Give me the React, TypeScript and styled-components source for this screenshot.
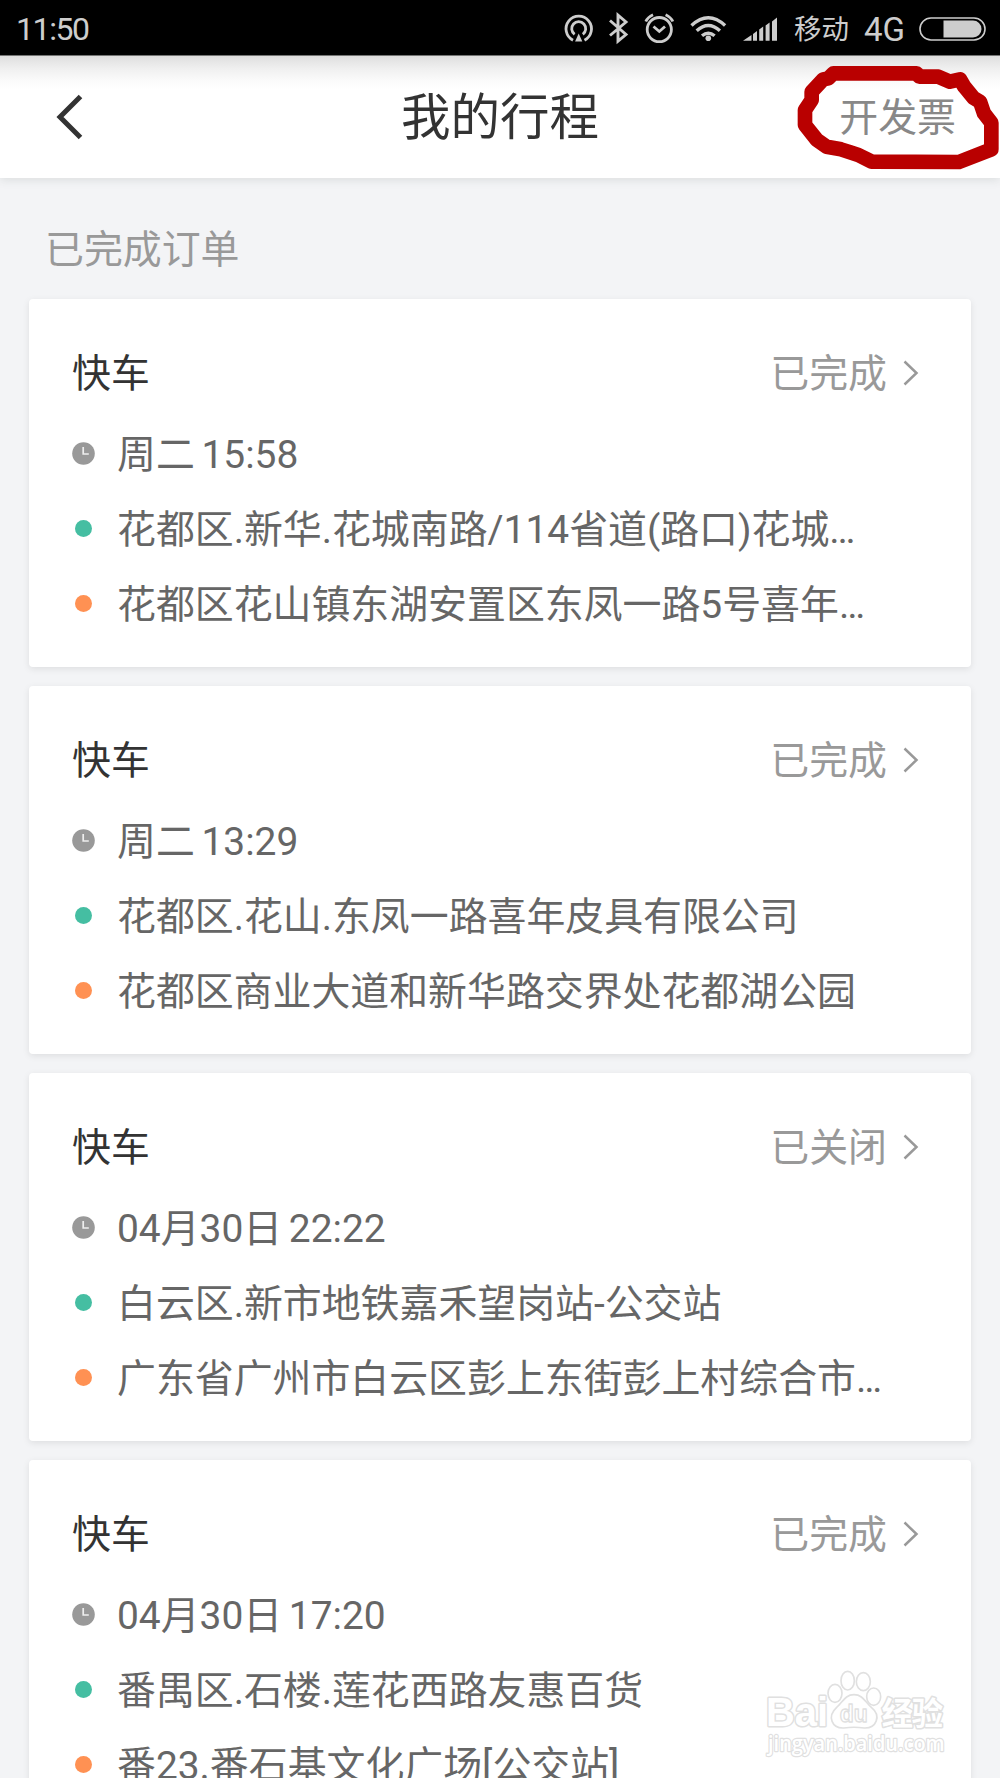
import React from 'react';
import styled, { createGlobalStyle } from 'styled-components';

const GlobalStyle = createGlobalStyle`
  * { box-sizing: border-box; }
  body {
    margin: 0;
    background: #f3f4f6;
    font-family: Roboto, "Noto Sans CJK SC", sans-serif;
  }
`;

const Screen = styled.div`
  position: relative;
  display: flex;
  flex-direction: column;
  width: 1000px;
  height: 1778px;
  overflow: hidden;
  background: #f3f4f6;
`;

const StatusBar = styled.div`
  display: flex;
  align-items: center;
  justify-content: space-between;
  flex: none;
  height: 56px;
  padding: 2px 14px 0 16px;
  background: #000;
  border-bottom: 1px solid #777;
  color: #cdcdcd;
`;

const Clock = styled.span`
  font-size: 32px;
  letter-spacing: -1.4px;
`;

const StatusIcons = styled.div`
  display: flex;
  align-items: center;
`;

const StatusGlyphs = styled.svg`
  display: block;
  width: 222px;
  height: 53px;
  margin-top: -2px;
`;

const Carrier = styled.span`
  margin-left: 12px;
  padding-top: 2px;
  font-size: 27.5px;
  line-height: 53px;
`;

const Network = styled.span`
  margin-left: 15px;
  padding-top: 1px;
  font-size: 33px;
  line-height: 53px;
`;

const Battery = styled.svg`
  display: block;
  width: 67px;
  height: 24px;
  margin-left: 14px;
`;

const Header = styled.header`
  position: relative;
  z-index: 1;
  display: grid;
  grid-template-columns: 1fr auto 1fr;
  align-items: center;
  flex: none;
  height: 122px;
  padding: 0 44px;
  background: linear-gradient(#dedede 0, #efefef 12px, #fafafa 24px, #fff 33px);
  box-shadow: 0 2px 9px rgba(60, 80, 70, 0.13);
`;

const BackIcon = styled.svg`
  display: block;
  width: 28px;
  height: 46px;
  margin-left: 12px;
`;

const Title = styled.h1`
  margin: 0;
  padding-top: 2px;
  color: #333;
  font-size: 49.5px;
  font-weight: 400;
  line-height: 118px;
`;

const InvoiceLink = styled.span`
  justify-self: end;
  padding-top: 2px;
  color: #888;
  font-size: 38.9px;
  line-height: 118px;
`;

const HandCircle = styled.svg`
  position: absolute;
  z-index: 2;
  left: 780px;
  top: 50px;
  width: 220px;
  height: 130px;
`;

const Section = styled.h2`
  flex: none;
  margin: 0;
  padding: 37px 0 0 45px;
  height: 121px;
  color: #999;
  font-size: 38.9px;
  font-weight: 400;
  line-height: 70px;
`;

const List = styled.main`
  display: flex;
  flex-direction: column;
  flex: none;
  gap: 19px;
  padding: 0 29px;
`;

const Card = styled.article`
  height: 368px;
  padding: 33px 52px 0 43px;
  background: #fff;
  border-radius: 4px;
  box-shadow: 0 2px 7px rgba(0, 0, 0, 0.09);
`;

const CardHead = styled.div`
  display: flex;
  align-items: center;
  height: 82px;
  margin-bottom: 2px;
  font-size: 38.9px;
  line-height: 82px;
`;

const Kind = styled.span`
  flex: 1;
  padding-top: 2px;
  color: #333;
`;

const Status = styled.span`
  padding-top: 2px;
  color: #999;
`;

const Arrow = styled.svg`
  display: block;
  width: 16px;
  height: 28px;
  margin-left: 16px;
`;

const Row = styled.div`
  display: flex;
  align-items: center;
  height: 75px;
  color: #666;
  font-size: 38.9px;
  line-height: 71px;
  white-space: pre;
`;

const RowText = styled.span`
  padding-top: 1px;
`;

const TimeText = styled(RowText)`
  word-spacing: -3px;
`;

const Marker = styled.span`
  display: flex;
  justify-content: center;
  width: 23px;
  margin-right: 22px;
`;

const Dot = styled.i<{ $color: string }>`
  width: 17px;
  height: 17px;
  border-radius: 50%;
  background: ${(p) => p.$color};
`;

const Watermark = styled.svg`
  position: absolute;
  left: 740px;
  top: 1640px;
  width: 230px;
  height: 138px;
`;

interface Trip {
  status: string;
  time: string;
  from: string;
  to: string;
}

const trips: Trip[] = [
  { status: '已完成', time: '周二 15:58', from: '花都区.新华.花城南路/114省道(路口)花城…', to: '花都区花山镇东湖安置区东凤一路5号喜年…' },
  { status: '已完成', time: '周二 13:29', from: '花都区.花山.东凤一路喜年皮具有限公司', to: '花都区商业大道和新华路交界处花都湖公园' },
  { status: '已关闭', time: '04月30日 22:22', from: '白云区.新市地铁嘉禾望岗站-公交站', to: '广东省广州市白云区彭上东街彭上村综合市…' },
  { status: '已完成', time: '04月30日 17:20', from: '番禺区.石楼.莲花西路友惠百货', to: '番23.番石基文化广场[公交站]' },
];

function TripCard({ trip }: { trip: Trip }) {
  return (
    <Card>
      <CardHead>
        <Kind>快车</Kind>
        <Status>{trip.status}</Status>
        <Arrow viewBox="0 0 16 28">
          <path d="M1.5 2.5 13.5 14 1.5 25.5" fill="none" stroke="#999" strokeWidth="2.5" />
        </Arrow>
      </CardHead>
      <Row>
        <Marker>
          <svg width="23" height="23" viewBox="0 0 23 23">
            <circle cx="11.5" cy="11.5" r="11.3" fill="#999" />
            <path d="M11.2 5v7h5.6" fill="none" stroke="#eee" strokeWidth="1.7" />
          </svg>
        </Marker>
        <TimeText>{trip.time}</TimeText>
      </Row>
      <Row>
        <Marker><Dot $color="#45bea2" /></Marker>
        <RowText>{trip.from}</RowText>
      </Row>
      <Row>
        <Marker><Dot $color="#ff9153" /></Marker>
        <RowText>{trip.to}</RowText>
      </Row>
    </Card>
  );
}

function StatusSymbols() {
  return (
    <StatusGlyphs viewBox="20 0 222 53" fill="none" stroke="#cdcdcd">
      <g strokeWidth="2.8">
        <path d="M33 39.2a12.7 12.7 0 1 1 11.5 0" />
        <path d="M34.6 33.3a7 7 0 1 1 8.2 0" />
        <path d="M38.7 32.5 42.3 40.5h-7.2z" fill="#cdcdcd" stroke="none" />
      </g>
      <path d="M70 19.5 86 33.5 78 40.2V14.2L86 21 70 34.5" strokeWidth="2.9" />
      <g strokeWidth="2.8">
        <circle cx="119.3" cy="28.6" r="12.1" />
        <path d="M113.5 25.5 119.3 30.5 125 25.5" />
        <path d="M105.8 20.5q2-4.5 7.2-6.8M132.8 20.5q-2-4.5-7.2-6.8" />
      </g>
      <g strokeWidth="3.4">
        <path d="M151.5 24.5q16.8-15.5 33.6 0" />
        <path d="M156.7 29.8q11.6-10.5 23.2 0" />
        <path d="M162 34.8q6.3-5.2 12.6 0" />
        <circle cx="168.3" cy="37.3" r="2.8" fill="#cdcdcd" stroke="none" />
      </g>
      <g fill="#cdcdcd" stroke="none">
        <path d="M203 39.8 211.5 34v5.8zM213 33l4-3v9.8h-4zM219.2 28.6l4-3v14.2h-4zM225.6 24.6l4-3v18.2h-4zM232 20.4l5-4v23.4h-5z" />
      </g>
    </StatusGlyphs>
  );
}

export default function App() {
  return (
    <Screen>
      <GlobalStyle />
      <StatusBar>
        <Clock>11:50</Clock>
        <StatusIcons>
          <StatusSymbols />
          <Carrier>移动</Carrier>
          <Network>4G</Network>
          <Battery viewBox="0 0 67 24">
            <rect x="1" y="1" width="65" height="22" rx="11" fill="none" stroke="#cdcdcd" strokeWidth="1.6" />
            <path d="M24.5 3.5H54a8.5 8.5 0 0 1 0 17H24.5z" fill="#cdcdcd" />
          </Battery>
        </StatusIcons>
      </StatusBar>
      <Header>
        <BackIcon viewBox="0 0 28 46">
          <path d="M24.5 2.5 4 23 24.5 43.5" fill="none" stroke="#333" strokeWidth="5" />
        </BackIcon>
        <Title>我的行程</Title>
        <InvoiceLink>开发票</InvoiceLink>
      </Header>
      <HandCircle viewBox="0 0 660 390">
        <path
          d="M160 70H410L418 80H475L510 95L540 88L553 110L580 143L600 155L612 190L634 218V298L537 336L275 335L235 315L210 307L183 298L140 290L110 269L75 225V180L95 150V125L130 88L145 85Z"
          fill="none"
          stroke="#b90000"
          strokeWidth="44"
          strokeLinejoin="round"
        />
      </HandCircle>
      <Section>已完成订单</Section>
      <List>
        {trips.map((trip) => (
          <TripCard key={trip.time} trip={trip} />
        ))}
      </List>
      <Watermark viewBox="0 0 690 414" fill="#fff" stroke="#e0e0e0" strokeWidth="5" strokeLinejoin="round">
        <g fontFamily="'Liberation Sans', sans-serif" fontWeight="700" paintOrder="stroke" strokeWidth="9">
          <text x="78" y="259" fontSize="124" textLength="186" lengthAdjust="spacingAndGlyphs">Bai</text>
          <text x="425" y="254" fontSize="94" fontFamily="'Noto Sans CJK SC', sans-serif" textLength="184">经验</text>
        </g>
        <ellipse cx="285" cy="160" rx="21" ry="27" />
        <ellipse cx="323" cy="122" rx="20" ry="28" />
        <ellipse cx="370" cy="125" rx="21" ry="27" />
        <ellipse cx="401" cy="170" rx="21" ry="26" />
        <path d="M342 164c28 0 34 24 52 38 32 26 14 64-22 62-20-3-40-3-60 0-36 2-52-34-22-62 18-14 24-38 52-38z" />
        <text x="299" y="246" fontSize="74" fontFamily="'Liberation Sans', sans-serif" fontWeight="700" textLength="84" lengthAdjust="spacingAndGlyphs" strokeWidth="4">du</text>
        <text x="84" y="332" fontSize="62" fontFamily="'Open Sans', sans-serif" fontWeight="600" textLength="530" lengthAdjust="spacingAndGlyphs" paintOrder="stroke" strokeWidth="7">jingyan.baidu.com</text>
      </Watermark>
    </Screen>
  );
}
